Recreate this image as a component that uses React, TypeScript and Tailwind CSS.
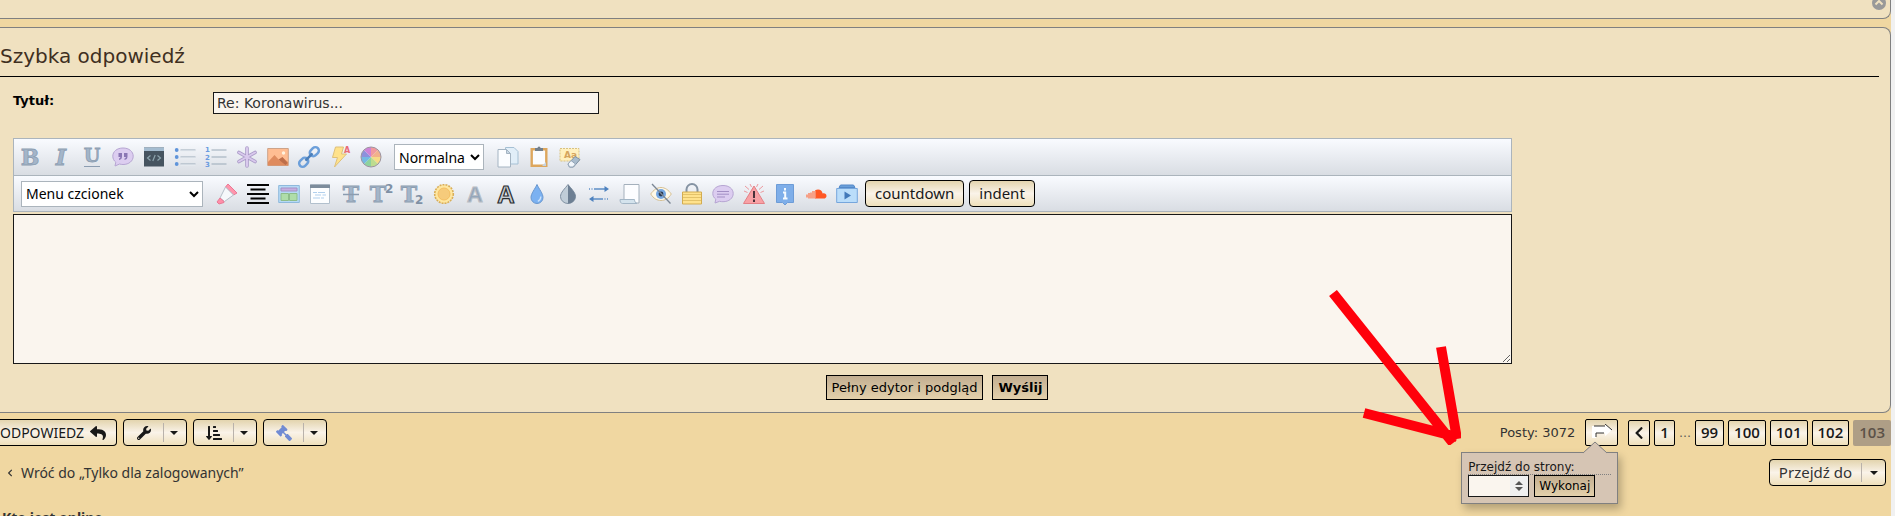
import { ReactNode } from 'react';
import {
  FaChevronLeft,
  FaGavel,
  FaReply,
  FaSortAmountDownAlt,
  FaWrench,
} from 'react-icons/fa';

interface IconProps {
  children: ReactNode;
}

interface ToolProps {
  label: string;
  children: ReactNode;
}

interface MenuButtonProps {
  label: string;
  children: ReactNode;
}

const Icon = ({ children }: IconProps) => (
  <svg
    viewBox="0 0 22 22"
    className="w-[22px] h-[22px] overflow-visible"
    fill="none"
  >
    {children}
  </svg>
);

const Tool = ({ label, children }: ToolProps) => (
  <button
    type="button"
    title={label}
    aria-label={label}
    className="flex items-center justify-center w-[31px] h-[26px] shrink-0"
  >
    <Icon>{children}</Icon>
  </button>
);

const Letter = ({ children }: IconProps) => (
  <text
    x="11"
    y="19"
    textAnchor="middle"
    fontFamily="DejaVu Serif, serif"
    fontWeight="bold"
    fontSize="22"
    fill="#a3b5c9"
    stroke="#8c9db1"
    strokeWidth="0.8"
  >
    {children}
  </text>
);

const Caret = () => (
  <span className="w-0 h-0 border-x-4 border-t-4 border-x-transparent border-t-[#181818]" />
);

const MenuButton = ({ label, children }: MenuButtonProps) => (
  <button
    type="button"
    aria-label={label}
    className="flex items-center h-[27px] w-16 rounded border border-black bg-linear-to-b from-[#e3d4ae] via-[#faf3e9] to-[#efe0bb]"
  >
    <span className="flex items-center justify-center w-[39px]">{children}</span>
    <span className="flex items-center justify-center h-[19px] w-[21px] border-l border-[#b9b2ab]">
      <Caret />
    </span>
  </button>
);

const PageLink = ({ children }: IconProps) => (
  <a
    href="#page"
    className="flex items-center justify-center h-[26px] px-[5px] rounded-xs border border-black bg-linear-to-b from-[#e3d4ae] via-[#faf3e9] to-[#efe0bb] font-['Open_Sans',sans-serif] font-semibold text-[15px] text-[#181818]"
  >
    {children}
  </a>
);

const TopTools = () => (
  <>
    <Tool label="Pogrubienie">
      <Letter>B</Letter>
    </Tool>
    <Tool label="Kursywa">
      <g fontStyle="italic">
        <Letter>I</Letter>
      </g>
    </Tool>
    <Tool label="Podkreślenie">
      <text
        x="11"
        y="16"
        textAnchor="middle"
        fontFamily="DejaVu Serif, serif"
        fontWeight="bold"
        fontSize="19"
        fill="#a3b5c9"
        stroke="#8c9db1"
        strokeWidth="0.8"
      >
        U
      </text>
      <path d="M3 20.500h16" stroke="#8c9db1" />
    </Tool>
    <Tool label="Cytat">
      <path
        d="M11 2C5 2 .8 5.500.8 10.200c0 2.500 1.200 4.600 3 6L3 20l4.600-2c1 .3 2.200.5 3.400.5 6 0 10.200-3.600 10.200-8.300S17 2 11 2z"
        fill="#dccdf0"
        stroke="#b6a5d2"
      />
      <path
        d="M6.500 7h3.500v3.500c0 2-1 3.200-3 3.500v-1.500c1-.3 1.300-.8 1.300-1.500H6.500zM12 7h3.500v3.500c0 2-1 3.200-3 3.500v-1.500c1-.3 1.300-.8 1.300-1.500H12z"
        fill="#8a76b4"
      />
    </Tool>
    <Tool label="Kod">
      <path d="M1 1.500h20v19H1z" fill="#465460" />
      <path d="M1 1.500h20V5H1z" fill="#a4bcd0" />
      <path
        d="M7.500 9.500 4.500 12l3 2.500M14.500 9.500l3 2.500-3 2.500M12.200 9l-2.400 6"
        stroke="#8da4ad"
        strokeWidth="1.200"
      />
    </Tool>
    <Tool label="Lista">
      <path d="M6.500 4h15M6.500 11h15M6.500 18h15" stroke="#9aa9b8" strokeWidth="1.200" />
      <path d="M6.500 5h15M6.500 12h15M6.500 19h15" stroke="#e8edf2" />
      <g fill="#5f94da">
        <circle cx="2.700" cy="4" r="1.900" />
        <circle cx="2.700" cy="11" r="1.900" />
        <circle cx="2.700" cy="18" r="1.900" />
      </g>
    </Tool>
    <Tool label="Lista numerowana">
      <path d="M6.500 4h15M6.500 11h15M6.500 18h15" stroke="#9aa9b8" strokeWidth="1.200" />
      <g
        fill="#6b9be0"
        fontFamily="DejaVu Sans, sans-serif"
        fontWeight="bold"
        fontSize="7"
      >
        <text x="0" y="6">1</text>
        <text x="0" y="13.500">2</text>
        <text x="0" y="21">3</text>
      </g>
    </Tool>
    <Tool label="Element listy">
      <path
        d="M11 2v18M3 6.500l16 9M3 15.500l16-9"
        stroke="#ab9cc8"
        strokeWidth="3.600"
        strokeLinecap="round"
      />
      <path
        d="M11 2v18M3 6.500l16 9M3 15.500l16-9"
        stroke="#d9c9ed"
        strokeWidth="2"
        strokeLinecap="round"
      />
    </Tool>
    <Tool label="Obrazek">
      <path d="M.7 2.500h20.600v17H.7z" fill="#ffbd92" stroke="#cda389" />
      <path d="M1 16 7.500 9l5 5.500 3-3L21 16v3.500H1z" fill="#df8b5e" />
      <path d="m11.500 13.500 4-2.500 5 6-2 2z" fill="#bd6e4a" />
      <circle cx="16.500" cy="7" r="1.700" fill="#fff3df" />
    </Tool>
    <Tool label="Odnośnik">
      <g transform="rotate(-45 11 11)" stroke="#6c9fda" strokeWidth="2.500">
        <rect x="-1.500" y="7.500" width="10" height="7" rx="3.500" />
        <rect x="13.500" y="7.500" width="10" height="7" rx="3.500" />
        <path d="M6 11h10" stroke="#4c7fba" />
      </g>
    </Tool>
    <Tool label="Flash">
      <path d="M6.500 1h8l-2 7h5L5.500 21l3-9.500h-5z" fill="#ffe28b" stroke="#dec07a" />
      <text
        x="15"
        y="7"
        fontFamily="DejaVu Sans, sans-serif"
        fontWeight="bold"
        fontSize="8"
        fill="#e96b75"
      >
        A
      </text>
    </Tool>
    <Tool label="Kolor czcionki">
      <path d="M11 11V1a10 10 0 0 1 7 3z" fill="#f19a9d" />
      <path d="m11 11 7-7a10 10 0 0 1 3 7z" fill="#f2b18b" />
      <path d="M11 11h10a10 10 0 0 1-3 7z" fill="#f7db86" />
      <path d="m11 11 7 7a10 10 0 0 1-7 3z" fill="#bddc8f" />
      <path d="M11 11v10a10 10 0 0 1-7-3z" fill="#8ed29e" />
      <path d="m11 11-7 7a10 10 0 0 1-3-7z" fill="#75b9e2" />
      <path d="M11 11H1a10 10 0 0 1 3-7z" fill="#8d91dc" />
      <path d="M11 11 4 4a10 10 0 0 1 7-3z" fill="#cd83d7" />
      <circle cx="11" cy="11" r="10" stroke="#9c93a0" />
    </Tool>
  </>
);

const ClipboardTools = () => (
  <>
    <Tool label="Kopiuj">
      <path d="M8.500 1.500H17l4 4V18H8.500z" fill="#e1eef8" stroke="#a5c0d4" />
      <path d="M1 3.500h8.500l4 4V21H1z" fill="#fbfdff" stroke="#a4b4c2" />
      <path d="M9.500 3.500v4h4z" fill="#c8d8e5" stroke="#a4b4c2" />
    </Tool>
    <Tool label="Wklej">
      <path d="M3.700 3.200h14.600v16.600H3.700z" fill="#fafcff" stroke="#dda75e" strokeWidth="2.400" />
      <path d="M7 2h2.500a1.500 1.500 0 0 1 3 0H15v3H7z" fill="#73808c" />
      <path d="m14 20 4-4v4z" fill="#c6d3df" />
    </Tool>
    <Tool label="Usuń formatowanie">
      <path
        d="M1 2.500h19v12.500H1z"
        fill="#fff0be"
        stroke="#d9c280"
        strokeDasharray="2 1"
      />
      <text
        x="5"
        y="12"
        fontFamily="DejaVu Sans, sans-serif"
        fontWeight="bold"
        fontSize="9"
        fill="#d5a45c"
      >
        Aa
      </text>
      <path d="m9 18 7-7.500 5 3-6.500 7.500h-4z" fill="#a9bccd" stroke="#7e91a4" />
      <path d="m9 18 3-3.500 4.500 3.500-2.500 3h-3.500z" fill="#f1f6fb" stroke="#93a5b7" />
    </Tool>
  </>
);

const BottomTools = () => (
  <>
    <Tool label="Wyróżnienie">
      <path d="m9.500 4 2.500-3 9 9-3.500 2z" fill="#ff95ac" stroke="#e97995" />
      <path d="M9.500 4 4 15l4.500 3.500 9-6.500z" fill="#f5f8fb" stroke="#b4bfc9" />
      <path d="m4 15-3 4 2 2 5-1.500v-1z" fill="#ff8fa9" stroke="#e97995" />
    </Tool>
    <Tool label="Wyrównanie">
      <path
        d="M0 2h22M3.500 6.500h15M0 11h22M3.500 15.500h15M0 20h22"
        stroke="#050505"
        strokeWidth="1.800"
      />
    </Tool>
    <Tool label="Tabela">
      <path d="M.7 2.500h20.600v17H.7z" fill="#b5daf6" stroke="#8fb9dc" />
      <path d="M3 5h16v3H3z" fill="#c6afe0" stroke="#a590c5" />
      <path d="M3 10.500h7.500v7H3zM11.500 10.500H19v7h-7.500z" fill="#afdda9" stroke="#8ebd8a" />
    </Tool>
    <Tool label="Spoiler">
      <path d="M1.500 2h19v18.500h-19z" fill="#fdfeff" stroke="#b2c0cd" />
      <path d="M1 1.500h20v3.500H1z" fill="#7d8c9c" />
      <path
        d="M4 9.500h4m1 0h7M6 12h6m1.500 0H17M4 15h7m1 0h3"
        stroke="#b1d0ed"
        strokeWidth="1.200"
      />
    </Tool>
    <Tool label="Przekreślenie">
      <Letter>T</Letter>
      <path d="M3 11.500h16" stroke="#8b9cb0" strokeWidth="1.500" />
    </Tool>
    <Tool label="Indeks górny">
      <g transform="translate(-4 0)">
        <Letter>T</Letter>
      </g>
      <text
        x="14"
        y="10"
        fontFamily="DejaVu Sans, sans-serif"
        fontWeight="bold"
        fontSize="12"
        fill="#7f91a5"
      >
        2
      </text>
    </Tool>
    <Tool label="Indeks dolny">
      <g transform="translate(-4 0)">
        <Letter>T</Letter>
      </g>
      <text
        x="13"
        y="21"
        fontFamily="DejaVu Sans, sans-serif"
        fontWeight="bold"
        fontSize="12"
        fill="#7f91a5"
      >
        2
      </text>
    </Tool>
    <Tool label="Blask">
      <circle
        cx="11"
        cy="11"
        r="9.300"
        fill="#ffe7a0"
        stroke="#d9ae58"
        strokeWidth="1.600"
        strokeDasharray="2 1"
      />
      <circle cx="11" cy="11" r="6" fill="#f6cb7b" stroke="#f4be62" />
    </Tool>
    <Tool label="Cień">
      <text
        x="11"
        y="19"
        textAnchor="middle"
        fontFamily="Liberation Sans, sans-serif"
        fontWeight="bold"
        fontSize="22"
        fill="#94a6bb"
        stroke="#b9bec4"
      >
        A
      </text>
    </Tool>
    <Tool label="Kontur">
      <text
        x="11"
        y="20"
        textAnchor="middle"
        fontFamily="Liberation Sans, sans-serif"
        fontWeight="bold"
        fontSize="24"
        fill="#c6ccd2"
        stroke="#2b2e31"
        strokeWidth="1.200"
      >
        A
      </text>
    </Tool>
    <Tool label="Rozmycie">
      <path
        d="M11 1.500C9 6 5 10.500 5 14.500a6 6 0 0 0 12 0C17 10.500 13 6 11 1.500z"
        fill="#7bb1f1"
        stroke="#6997ce"
      />
      <path d="M14.800 13.500c0 2.500-1 4-3 4.800" stroke="#cae2fb" strokeWidth="1.300" />
    </Tool>
    <Tool label="Przejście">
      <path
        d="M11 1.500C8 5.500 3.500 9.500 3.500 13.500a7.500 7 0 0 0 15 0c0-4-4.500-8-7.500-12z"
        fill="#c0cdd8"
        stroke="#8292a3"
      />
      <path d="M11 1.500c3 4 7.500 8 7.500 12a7.500 7 0 0 1-7.500 7z" fill="#6d7f93" />
    </Tool>
    <Tool label="Przewijanie">
      <path d="M6 6h11M5 16h10" stroke="#5e8ec6" strokeWidth="1.700" />
      <path
        d="M1 6h1m1.500 0h1M16.500 16h1m1.500 0h1"
        stroke="#5e8ec6"
        strokeWidth="1.700"
      />
      <path d="m16.500 3 4.500 3-4.500 3zM5.500 13 1 16l4.500 3z" fill="#4e82bf" />
    </Tool>
    <Tool label="Zwój">
      <path d="M5 1.500h15v18.500H5z" fill="#fcfdff" stroke="#a4b0bc" />
      <path d="M1 16.500h14.500c0 2 1 3.500 2.500 4H3.500c-1.600 0-2.500-1.600-2.500-4z" fill="#d4e3ed" stroke="#a3b6c6" />
    </Tool>
    <Tool label="Ukryty tekst">
      <path
        d="M.7 11C3.500 7 7 4.500 11 4.500S18.500 7 21.300 11C18.500 15.500 15 17.500 11 17.500S3.500 15.500.7 11z"
        fill="#fff9e8"
        stroke="#d6c093"
      />
      <circle cx="11" cy="11" r="5" fill="#77a8e2" />
      <circle cx="11" cy="11" r="2.400" fill="#28384f" />
      <path d="m2 1 18.500 19.500" stroke="#7b8795" strokeWidth="1.300" />
    </Tool>
    <Tool label="Blokada">
      <path
        d="M5.500 10V6.500a5.500 5.500 0 0 1 11 0V10"
        stroke="#8593a3"
        strokeWidth="2"
      />
      <path d="M1.500 9h19v12h-19z" fill="#ffe28d" stroke="#d3ac50" />
      <path d="M2 11.500h18M2 14.500h18M2 17.500h18" stroke="#e3c269" />
    </Tool>
    <Tool label="Komentarz">
      <path
        d="M11 2.500C5 2.500.8 5.800.8 10.500c0 2.500 1.200 4.300 3 5.700L3 20l4.600-1.700c1 .3 2.200.4 3.400.4 6 0 10.200-3.500 10.200-8.200S17 2.500 11 2.500z"
        fill="#dccdf0"
        stroke="#b6a5d2"
      />
      <path d="M5 8.500h12M5 11.200h12M5 14h8" stroke="#a38fc4" />
    </Tool>
    <Tool label="Ostrzeżenie">
      <path d="m11 3 10.500 17.500H.5z" fill="#f8a1a5" stroke="#e38086" />
      <path d="M11 8v7M11 16.500v2.500" stroke="#493139" strokeWidth="2" />
      <path
        d="M2 3l4 3.500M1 8l3.500 1.500M20 3l-4 3.500M21 8l-3.500 1.500M7 1l1.500 3M15 1l-1.500 3"
        stroke="#ec9a9f"
      />
    </Tool>
    <Tool label="Informacja">
      <path d="M2.500 1.500h17v18h-6L11 22l-2.500-2.500h-6z" fill="#7eaee9" stroke="#6d9cd7" />
      <path d="M11 5v2.500M9 9.500h2.200v6M9 15.500h4.500" stroke="#f6fbff" strokeWidth="2" />
    </Tool>
    <Tool label="SoundCloud">
      <path
        d="M10 15.500V7.500c1-.8 2-1 3-1 2.500 0 4.200 1.600 4.600 4 .4-.2.800-.2 1.200-.2 1.500 0 2.700 1.200 2.700 2.600s-1.200 2.600-2.700 2.600z"
        fill="#ff5724"
      />
      <path
        d="M2 11.500v3M4 10v5.500M6 9.500v6M8 8v7.500M10 8v7.500"
        stroke="#f89374"
        strokeWidth="1.700"
      />
    </Tool>
    <Tool label="Film">
      <path d="M3 4.500 4.500 2h13L19 4.500z" fill="#6a9fda" stroke="#5489c8" />
      <path d="M.7 5.500h20.600v14H.7z" fill="#baddfa" stroke="#76a6dc" />
      <path d="M8.500 8.500v8l6.500-4z" fill="#4279b9" />
    </Tool>
  </>
);

const QuickReply = () => (
  <form className="border border-l-0 border-[#808080] rounded-r-lg bg-[#f0e1c0]">
    <div className="pr-[11px]">
      <h2 className="pt-[14px] h-[49px] border-b border-black text-xl leading-7 text-[#3f2f1f]">
        Szybka odpowiedź
      </h2>
    </div>
    <div className="pl-[13px] pr-[3px]">
      <div className="flex items-start pt-[15px]">
        <label
          htmlFor="subject"
          className="w-[200px] pt-px font-bold text-[13px] leading-4 text-black"
        >
          Tytuł:
        </label>
        <input
          id="subject"
          type="text"
          defaultValue="Re: Koronawirus..."
          className="w-[386px] h-[22px] px-[3px] border border-[#181818] bg-[#faf5ee] text-sm text-[#333333]"
        />
      </div>
      <div className="w-4/5 mt-6 border border-[#abb4bc]">
        <div className="flex items-center h-[37px] border-b border-[#abb4bc] bg-linear-to-b from-[#f9fbff] to-[#d9dde3]">
          <TopTools />
          <select
            aria-label="Rozmiar czcionki"
            className="w-[90px] h-[26px] mx-2 border border-[#abb4bc] bg-white text-black font-['Noto_Sans',sans-serif] text-sm"
          >
            <option>Normalna</option>
          </select>
          <ClipboardTools />
        </div>
        <div className="flex items-center h-[35px] pl-[7px] bg-linear-to-b from-[#f9fbff] to-[#d9dde3]">
          <select
            aria-label="Menu czcionek"
            className="w-[182px] h-[26px] mr-2 border border-[#abb4bc] bg-white text-black font-['Noto_Sans',sans-serif] text-sm"
          >
            <option>Menu czcionek</option>
          </select>
          <BottomTools />
          <div className="flex gap-[5px] pl-[3px] font-['Noto_Sans',sans-serif] text-[15px] text-[#181818]">
            <button
              type="button"
              className="h-[27px] px-[9px] rounded border border-black bg-linear-to-b from-[#e3d4ae] via-[#faf3e9] to-[#efe0bb]"
            >
              countdown
            </button>
            <button
              type="button"
              className="h-[27px] px-[9px] rounded border border-black bg-linear-to-b from-[#e3d4ae] via-[#faf3e9] to-[#efe0bb]"
            >
              indent
            </button>
          </div>
        </div>
      </div>
      <textarea
        aria-label="Treść wiadomości"
        className="block w-4/5 h-[150px] mt-0.5 border border-[#181818] bg-[#faf5ee]"
      />
    </div>
    <div className="flex justify-center gap-[9px] pt-[11px] pb-3 pr-4 text-[13px] text-black">
      <button
        type="button"
        className="h-[25px] px-[5px] border border-black bg-linear-to-b from-[#c2ae91] to-[#e3d0ab]"
      >
        Pełny edytor i podgląd
      </button>
      <button
        type="submit"
        className="h-[25px] px-[5px] border border-black bg-linear-to-b from-[#c2ae91] to-[#e3d0ab] font-bold"
      >
        Wyślij
      </button>
    </div>
  </form>
);

const JumpPopup = () => (
  <div className="absolute top-[33px] right-0 w-[157px] h-[52px] pt-1.5 px-1.5 border border-[#808080] bg-[#d6c5b4] shadow-[3px_5px_8px_rgba(0,0,0,0.25)]">
    <svg
      viewBox="0 0 24 13"
      className="absolute -top-3 right-2.5 w-6 h-[13px]"
      fill="#d6c5b4"
    >
      <path d="M0 12 12 1l12 11v1H0z" />
      <path d="M0 12 12 1l12 11" stroke="#808080" />
    </svg>
    <label
      htmlFor="page"
      className="block h-4 border-b border-dotted border-[#808080] text-xs leading-4 text-[#181818]"
    >
      Przejdź do strony:
    </label>
    <div className="flex gap-[5px]">
      <span className="relative">
        <input
          id="page"
          type="number"
          className="block w-[61px] h-[22px] border border-[#181818] bg-[#faf5ee] text-xs"
        />
        <svg
          viewBox="0 0 18 20"
          className="absolute top-px right-px w-[18px] h-5"
          fill="#555555"
        >
          <path d="M0 0h18v20H0z" fill="#efefef" />
          <path d="m9 5 4 4H5zM9 15l4-4H5z" />
        </svg>
      </span>
      <button
        type="button"
        className="w-[61px] h-[22px] border border-black bg-linear-to-b from-[#c2ae91] to-[#e3d0ab] text-xs text-black"
      >
        Wykonaj
      </button>
    </div>
  </div>
);

const ActionBar = () => (
  <div className="flex justify-between pt-1.5">
    <div className="flex gap-1.5">
      <button
        type="button"
        className="flex items-center gap-1.5 h-[27px] pr-2.5 rounded-r border border-l-0 border-black bg-linear-to-b from-[#e3d4ae] via-[#faf3e9] to-[#efe0bb] font-['Noto_Sans',sans-serif] text-sm text-[#181818]"
      >
        ODPOWIEDZ
        <FaReply className="w-4 h-4" />
      </button>
      <MenuButton label="Narzędzia tematu">
        <FaWrench className="w-3.5 h-3.5 text-[#181818]" />
      </MenuButton>
      <MenuButton label="Sortowanie">
        <FaSortAmountDownAlt className="w-4 h-4 text-[#181818]" />
      </MenuButton>
      <MenuButton label="Moderacja">
        <FaGavel className="w-4 h-4 text-[#718bd3] -scale-x-100" />
      </MenuButton>
    </div>
    <div className="flex items-center gap-1">
      <span className="mr-1.5 text-[13px] text-[#333333]">Posty: 3072</span>
      <div className="relative mr-1.5">
        <button
          type="button"
          aria-label="Przejdź do strony"
          className="flex justify-center w-[33px] h-[27px] pt-1 rounded-xs border border-black bg-linear-to-b from-[#e3d4ae] via-[#faf3e9] to-[#efe0bb]"
        >
          <svg viewBox="0 0 20 14" className="w-5 h-3.5">
            <path d="M0 14V2h13V0l7 6-7 6V9H4v5z" fill="#ffffff" />
            <path d="M2 2h11M13 0l7 6M4 13V9h8" stroke="#333333" fill="none" />
          </svg>
        </button>
        <JumpPopup />
      </div>
      <PageLink>
        <FaChevronLeft className="w-2.5 h-3.5" />
      </PageLink>
      <PageLink>1</PageLink>
      <span className="text-xs text-[#555555]">…</span>
      <PageLink>99</PageLink>
      <PageLink>100</PageLink>
      <PageLink>101</PageLink>
      <PageLink>102</PageLink>
      <span className="flex items-center h-[26px] px-1.5 rounded-xs bg-[#ae9e86] font-['Open_Sans',sans-serif] font-semibold text-[15px] text-[#5c5248]">
        103
      </span>
    </div>
  </div>
);

export default function App() {
  return (
    <div className="flex h-screen overflow-hidden bg-[#f0d7a1] font-['DejaVu_Sans',sans-serif]">
      <div className="relative flex-1 min-w-0">
        <div className="flex justify-end h-[19px] mb-2 border-b border-r border-[#808080] rounded-br-lg bg-[#f0e1c0] overflow-hidden">
          <a href="#top" aria-label="Na górę" className="-mt-1 mr-1">
            <svg viewBox="0 0 14 14" className="w-3.5 h-3.5" fill="none">
              <circle cx="7" cy="7" r="7" fill="#999999" />
              <path d="m3.500 8.500 3.500-3.500 3.500 3.500" stroke="#f0e1c0" strokeWidth="2" />
            </svg>
          </a>
        </div>
        <QuickReply />
        <ActionBar />
        <div className="flex items-start justify-between pt-[13px] pl-[7px] pr-[5px]">
          <a
            href="#forum"
            className="flex items-center gap-2 pt-1 font-['Noto_Sans',sans-serif] text-sm text-[#333333]"
          >
            <FaChevronLeft className="w-1.5 h-2" />
            Wróć do „Tylko dla zalogowanych”
          </a>
          <button
            type="button"
            className="flex items-center h-[27px] rounded border border-black bg-linear-to-b from-[#e3d4ae] via-[#faf3e9] to-[#efe0bb] font-['Noto_Sans',sans-serif] text-[15px] text-[#333333]"
          >
            <span className="px-[9px]">Przejdź do</span>
            <span className="flex items-center justify-center w-6 h-[19px] border-l border-[#b9b2ab]">
              <Caret />
            </span>
          </button>
        </div>
        <h3 className="pt-6 pl-0.5 font-['Noto_Sans',sans-serif] text-sm leading-4 font-bold text-[#333333]">
          Kto jest online
        </h3>
        <svg
          viewBox="0 0 136 160"
          className="absolute top-[285px] right-[430px] w-[136px] h-40 pointer-events-none"
          fill="none"
          stroke="#ff000b"
          strokeWidth="10"
        >
          <path d="m8 8 120 150M116 62l16 92M39 128l93 24" />
        </svg>
      </div>
      <div className="w-1 bg-[#f1f1f1]" />
    </div>
  );
}
